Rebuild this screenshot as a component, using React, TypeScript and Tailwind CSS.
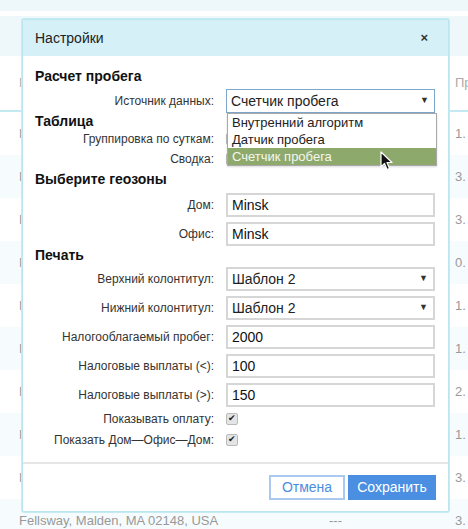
import React from 'react';

const font = { fontFamily: '"Liberation Sans", Arial, sans-serif' };

const rows = [
  { left: 'Minsk', right: '1.' },
  { left: 'Minsk', right: '3.' },
  { left: 'Minsk', right: '3.' },
  { left: 'Minsk', right: '0.' },
  { left: 'Minsk', right: '1.' },
  { left: 'Minsk', right: '1.' },
  { left: 'Minsk', right: '2.' },
  { left: 'Minsk', right: '1.' },
  { left: 'Minsk', right: '3.' },
  { left: 'Fellsway, Malden, MA 02148, USA', mid: '---', right: '3.' },
];

function Label({ children }: { children: React.ReactNode }) {
  return <div className="w-[179px] shrink-0 text-right text-[12px] text-[#333]">{children}</div>;
}

function Row({ label, children, h = 'h-[24px]' }: { label: string; children?: React.ReactNode; h?: string }) {
  return (
    <div className={`flex items-center gap-[12px] ${h}`}>
      <Label>{label}</Label>
      {children}
    </div>
  );
}

function TextInput({ value }: { value: string }) {
  return (
    <div className="flex h-[24px] w-[209px] items-center border-2 border-[#d6d6d6] bg-white px-[4px] text-[14px] text-[#111]">
      {value}
    </div>
  );
}

function Select({ value, focused }: { value: string; focused?: boolean }) {
  return (
    <div
      className={`flex h-[24px] w-[209px] items-center justify-between bg-white px-[4px] text-[14px] text-[#222] ${
        focused ? 'border border-[#7ea7c9]' : 'border-2 border-[#d6d6d6]'
      }`}
    >
      <span>{value}</span>
      <span className="pr-[1px] text-[9px] text-[#333]">▼</span>
    </div>
  );
}

function Check({ hidden }: { hidden?: boolean }) {
  return (
    <div className="flex h-[12px] w-[12px] items-center justify-center rounded-[2px] border border-[#bbb] bg-[#e4e4e4] text-[9px] leading-none text-[#222]">
      {hidden ? null : '✔'}
    </div>
  );
}

function Heading({ children, h }: { children: React.ReactNode; h: string }) {
  return <div className={`flex items-center text-[14px] font-bold text-[#111] ${h}`}>{children}</div>;
}

export default function App() {
  return (
    <div className="relative h-[529px] w-[468px] overflow-hidden bg-white" style={font}>
      {/* page behind the dialog */}
      <div className="h-[11px] bg-[#eef7fa]" />
      <div className="h-[5px] bg-white" />
      <div className="h-[40px] bg-[#eef7fa]" />
      <div className="flex h-[56px] items-center justify-between border-b-2 border-[#c3e9f1] pl-[19px] text-[13px] text-[#aaa]">
        <span>М</span>
        <span className="w-[13px] overflow-hidden whitespace-nowrap">Пр</span>
      </div>
      {rows.map((r, i) => (
        <div
          key={i}
          className={`flex h-[43px] items-center pl-[19px] text-[13px] text-[#999] ${i % 2 === 1 ? 'bg-[#f6fcfd]' : 'bg-white'}`}
        >
          <span className="w-[310px] whitespace-nowrap">{r.left}</span>
          <span className="w-[126px]">{r.mid ?? ''}</span>
          <span>{r.right}</span>
        </div>
      ))}

      {/* dialog */}
      <div className="absolute left-[22px] top-[19px] w-[427px] rounded-[2px] border border-[#bce6ef] bg-white shadow-[0_0_0_1px_#c6ecf3]">
        <div className="flex h-[36px] items-center justify-between bg-[#d6f0f8] px-[12px] text-[14px] text-[#222]">
          <span>Настройки</span>
          <span className="pr-[8px] text-[13px] font-bold text-[#333]">×</span>
        </div>

        <div className="relative px-[12px] pb-[12px] pt-[11px]">
          <Heading h="h-[18px]">Расчет пробега</Heading>
          <div className="mt-[4px]">
            <Row label="Источник данных:">
              <Select value="Счетчик пробега" focused />
            </Row>
          </div>
          <Heading h="h-[16px]">Таблица</Heading>
          <Row label="Группировка по суткам:" h="h-[20px]">
            <Check hidden />
          </Row>
          <Row label="Сводка:" h="h-[20px]">
            <Check hidden />
          </Row>
          <Heading h="h-[20px]">Выберите геозоны</Heading>
          <div className="mt-[4px] flex flex-col gap-[5px]">
            <Row label="Дом:">
              <TextInput value="Minsk" />
            </Row>
            <Row label="Офис:">
              <TextInput value="Minsk" />
            </Row>
          </div>
          <Heading h="h-[19px]">Печать</Heading>
          <div className="mt-[2px] flex flex-col gap-[5px]">
            <Row label="Верхний колонтитул:">
              <Select value="Шаблон 2" />
            </Row>
            <Row label="Нижний колонтитул:">
              <Select value="Шаблон 2" />
            </Row>
            <Row label="Налогооблагаемый пробег:">
              <TextInput value="2000" />
            </Row>
            <Row label="Налоговые выплаты (<):">
              <TextInput value="100" />
            </Row>
            <Row label="Налоговые выплаты (>):">
              <TextInput value="150" />
            </Row>
          </div>
          <div className="mt-[1px]">
            <Row label="Показывать оплату:" h="h-[21px]">
              <Check />
            </Row>
            <Row label="Показать Дом—Офис—Дом:" h="h-[21px]">
              <Check />
            </Row>
          </div>

          {/* open select list */}
          <div className="absolute left-[204px] top-[57px] w-[210px] border border-[#a9a9a9] bg-white text-[13px] text-[#222] shadow-[0_1px_2px_rgba(0,0,0,0.15)]">
            <div className="flex h-[17px] items-center px-[4px]">Внутренний алгоритм</div>
            <div className="flex h-[17px] items-center px-[4px]">Датчик пробега</div>
            <div className="flex h-[17px] items-center bg-[#8ea96c] px-[4px] text-[#f4f7f0]">Счетчик пробега</div>
          </div>

          {/* mouse pointer */}
          <svg className="absolute left-[357px] top-[95px]" width="14" height="20" viewBox="0 0 14 20">
            <path d="M1 1 L1 16 L4.5 12.5 L7 18.5 L9.5 17.5 L7 11.5 L12 11.5 Z" fill="#111" stroke="#fff" strokeWidth="1.2" strokeLinejoin="round" />
          </svg>
        </div>

        <div className="flex justify-end gap-[3px] border-t-2 border-[#e6e6e6] px-[12px] pb-[11px] pt-[11px]">
          <button className="h-[25px] w-[76px] border-2 border-[#a9c9ef] bg-white text-[14px] text-[#4a8ee0]">Отмена</button>
          <button className="h-[25px] w-[88px] border border-[#4a8ee0] bg-[#4a8fe2] text-[14px] text-white">Сохранить</button>
        </div>
      </div>
    </div>
  );
}
